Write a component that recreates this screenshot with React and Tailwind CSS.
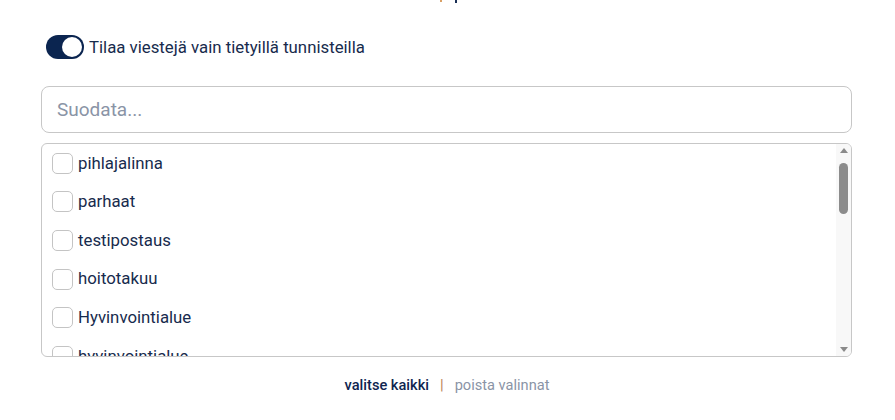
import React from "react";

const items = ["pihlajalinna", "parhaat", "testipostaus", "hoitotakuu", "Hyvinvointialue", "hyvinvointialue"];

export default function App() {
  return (
    <div className="w-[895px] h-[420px] bg-white relative overflow-hidden" style={{ fontFamily: "Roboto, 'Liberation Sans', sans-serif" }}>
      <div className="h-[4px] relative">
        <div className="absolute left-[440px] top-0 w-[2px] h-[2px] bg-[#d9a066]" />
        <div className="absolute left-[455px] top-0 w-[2px] h-[3px] bg-[#1a2f55]" />
      </div>
      <div className="pl-[46px] pt-[31px] flex items-center gap-[5px]">
        <div className="w-[38px] h-[24px] rounded-full bg-[#0b2550] flex items-center justify-end pr-[2px]">
          <div className="w-[20px] h-[20px] rounded-full bg-white" />
        </div>
        <span className="text-[16.8px] text-[#172b4d] leading-[22px]">Tilaa viestejä vain tietyillä tunnisteilla</span>
      </div>
      <div className="mx-[41px] w-[811px] mt-[27px]">
        <div className="h-[47px] rounded-[8px] border border-[#c7c7c7] flex items-center pl-[15px] pt-[2px]">
          <span className="text-[19px] text-[#8a94a6]">Suodata...</span>
        </div>
        <div className="mt-[10px] h-[214px] rounded-[6px] border border-[#c7c7c7] flex overflow-hidden">
          <div className="flex-1 pl-[10px] pt-[0px] overflow-hidden">
            {items.map((t) => (
              <div key={t} className="h-[38.6px] flex items-center gap-[5px]">
                <div className="w-[21px] h-[21px] rounded-[5px] border border-[#c4c4c4] bg-white shrink-0" />
                <span className="text-[16.8px] text-[#172b4d]">{t}</span>
              </div>
            ))}
          </div>
          <div className="w-[15px] bg-[#f8f8f8] flex flex-col items-center">
            <div className="h-[13px] flex items-center justify-center">
              <div className="w-0 h-0 border-l-[4px] border-r-[4px] border-b-[5px] border-l-transparent border-r-transparent border-b-[#8a8a8a]" />
            </div>
            <div className="w-[9px] h-[51px] rounded-full bg-[#8c8c8c] mt-[6px]" />
            <div className="flex-1" />
            <div className="h-[13px] flex items-center justify-center">
              <div className="w-0 h-0 border-l-[4px] border-r-[4px] border-t-[5px] border-l-transparent border-r-transparent border-t-[#8a8a8a]" />
            </div>
          </div>
        </div>
      </div>
      <div className="mt-[18px] flex justify-center items-center gap-[11px] text-[14.6px] pr-[1px]">
        <span className="text-[#0f2550] font-medium">valitse kaikki</span>
        <span className="text-[#c0895a] font-medium">|</span>
        <span className="text-[#8a94a6]">poista valinnat</span>
      </div>
    </div>
  );
}
